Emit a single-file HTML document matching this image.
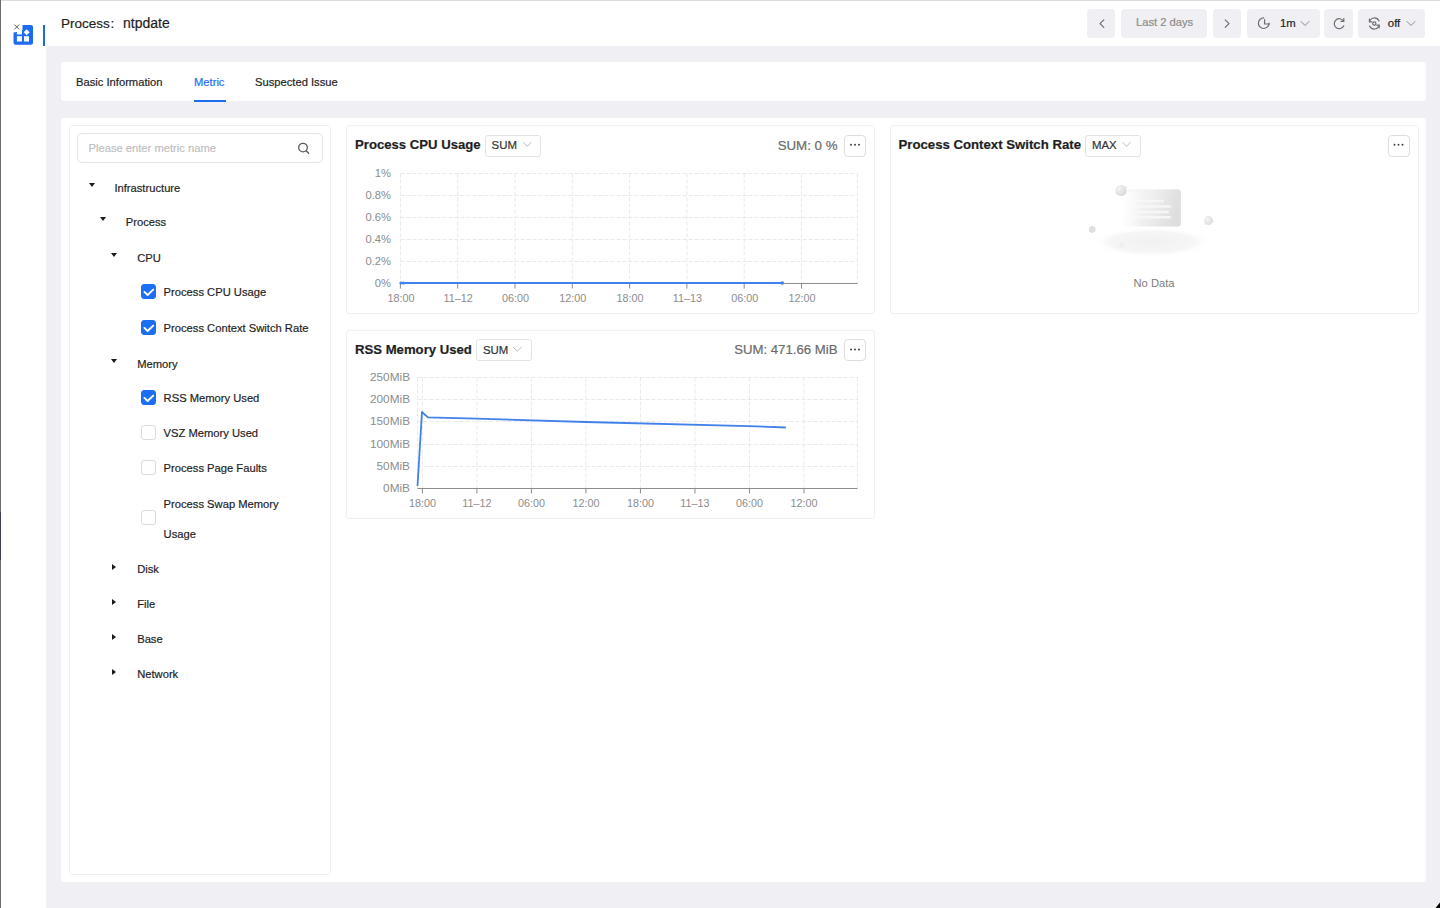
<!DOCTYPE html>
<html><head><meta charset="utf-8">
<style>
*{box-sizing:border-box;margin:0;padding:0}
html,body{width:1440px;height:908px;overflow:hidden;background:#fff;font-family:"Liberation Sans",sans-serif;color:#1f1f1f}
.t,.tree,.tab{-webkit-text-stroke:0.2px currentColor}
.abs{position:absolute}
#lborder{left:0;top:0;width:1px;height:908px;background:#6b6b6b}
#tborder{left:0;top:0;width:1440px;height:1px;background:#dcdcdc}
#main{left:46px;top:46px;width:1394px;height:862px;background:#f0f0f4}
.card{background:#fff;border-radius:3px}
.tab{position:absolute;top:0;height:40px;line-height:40px;font-size:11.2px;color:#1f1f1f;white-space:nowrap}
.btn{position:absolute;top:9px;height:29px;background:#f0f0f4;border-radius:4px}
.t{position:absolute;white-space:nowrap;line-height:1}
.panel{position:absolute;border:1px solid #efefef;border-radius:3px;background:#fff}
.card2{border-color:#f0f0f0;border-radius:3px}
.sel{position:absolute;height:22px;border:1px solid #e3e3e3;border-radius:3px;background:#fff}
.dots{position:absolute;width:22px;height:22px;border:1px solid #dedede;border-radius:4px;background:#fff}
.tree{position:absolute;font-size:11.2px;color:#1f1f1f;white-space:nowrap;line-height:1}
.caret-d{position:absolute;width:0;height:0;border-left:3px solid transparent;border-right:3px solid transparent;border-top:4px solid #1a1a1a}
.caret-r{position:absolute;width:0;height:0;border-top:3px solid transparent;border-bottom:3px solid transparent;border-left:4px solid #1a1a1a}
.cb{position:absolute;width:15px;height:15px;border-radius:3px;border:1px solid #dcdcdc;background:#fff}
.cb.on{background:#1c6ef2;border-color:#1c6ef2}
</style></head><body>
<div class="abs" id="tborder"></div>
<div class="abs" id="lborder"></div><div class="abs" style="left:0;top:512px;width:1px;height:48px;background:#3b3a66"></div>

<!-- sidebar logo -->
<svg class="abs" style="left:10px;top:22px" width="26" height="26" viewBox="10 22 26 26">
  <path d="M22.5 25 H31 Q33 25 33 27 V42.8 Q33 44.8 31 44.8 H15.5 Q13.5 44.8 13.5 42.8 V32.5 Q18 32 22.5 30 Z" fill="#1d6cf0"/>
  <rect x="16.9" y="36.2" width="5" height="5.3" fill="#fff"/>
  <rect x="24" y="36.2" width="5" height="5.3" fill="#fff"/>
  <rect x="16.9" y="30" width="5" height="4.5" fill="#fff"/>
  <path d="M26.7 29.2 L29.7 32.2 L26.7 35.2 L23.7 32.2 Z" fill="#fff"/>
  <path d="M14.4 24.6 L19.1 29.3 M19.1 24.6 L14.4 29.3" stroke="#5a5a5a" stroke-width="1"/>
</svg>
<div class="abs" style="left:43px;top:25px;width:2px;height:21px;background:#1f6ad8"></div>

<!-- header -->
<div class="t" style="left:61px;top:16.6px;font-size:13.5px;color:#1f1f1f">Process</div><div class="t" style="left:110.5px;top:16.6px;font-size:13.5px;color:#1f1f1f">:</div><div class="t" style="left:123px;top:16.2px;font-size:14px;color:#1f1f1f">ntpdate</div>

<div class="btn" style="left:1087px;width:28px"></div>
<div class="btn" style="left:1121px;width:86px"></div>
<div class="btn" style="left:1213px;width:28px"></div>
<div class="btn" style="left:1247px;width:73px"></div>
<div class="btn" style="left:1324px;width:29px"></div>
<div class="btn" style="left:1358px;width:67px"></div>
<svg class="abs" style="left:0;top:0" width="1440" height="46" viewBox="0 0 1440 46">
  <g fill="none" stroke="#6e6e6e" stroke-width="1.2" stroke-linecap="round" stroke-linejoin="round">
    <path d="M1103.8 19.8 L1100 23.6 L1103.8 27.4"/>
    <path d="M1225.2 19.8 L1229 23.6 L1225.2 27.4"/>
    <!-- clock/pie -->
    <path d="M1269 23.2 A5.3 5.3 0 1 1 1263.7 17.9" />
    <path d="M1264.6 19.6 V24 H1269.6" />
    <path d="M1301 21.5 L1305 25.5 L1309 21.5" stroke="#8c8c8c" stroke-width="1"/>
    <!-- refresh -->
    <path d="M1343.6 21.2 A5 5 0 1 0 1343.8 25.8"/>
    <path d="M1343.8 18.6 V21.4 H1341" />
    <!-- auto refresh -->
    <path d="M1369.6 21.6 A5 5 0 0 1 1379 21"/>
    <path d="M1379 25.4 A5 5 0 0 1 1369.6 26"/>
    <path d="M1369.4 19.2 V21.8 H1371.8"/>
    <path d="M1379.2 27.8 V25.2 H1376.8"/>
    <circle cx="1374.3" cy="23.5" r="1.6"/>
    <path d="M1407 21.5 L1411 25.5 L1415 21.5" stroke="#8c8c8c" stroke-width="1"/>
  </g>
</svg>
<div class="t" style="left:1136px;top:17.2px;font-size:11.2px;color:#8c8c8c">Last 2 days</div>
<div class="t" style="left:1280px;top:17.6px;font-size:11.3px;color:#1f1f1f">1m</div>
<div class="t" style="left:1387.8px;top:18.1px;font-size:11.4px;color:#1f1f1f">off</div>

<div class="abs" id="main"></div>
<div class="abs card" style="left:61px;top:62px;width:1365px;height:39px">
  <div class="tab" style="left:15px">Basic Information</div>
  <div class="tab" style="left:133px;color:#1f6ef0">Metric</div>
  <div class="abs" style="left:133px;top:38px;width:32px;height:2px;background:#1f6ef0"></div>
  <div class="tab" style="left:194px">Suspected Issue</div>
</div>
<div class="abs card" style="left:61px;top:118px;width:1365px;height:764px"></div>

<!-- left panel -->
<div class="panel" style="left:69px;top:125px;width:262px;height:750px"></div>
<div class="abs" style="left:77px;top:133px;width:246px;height:30px;border:1px solid #e3e3e3;border-radius:5px"></div>

<!-- tree -->
<div class="t" style="left:88.5px;top:143.02px;font-size:11.2px;color:#bfbfbf">Please enter metric name</div>
<svg class="abs" style="left:295px;top:140px" width="16" height="16" viewBox="295 140 16 16"><circle cx="303" cy="147.6" r="4.3" fill="none" stroke="#5c5c5c" stroke-width="1.3"/><path d="M306.2 150.8 L308.6 153.2" stroke="#5c5c5c" stroke-width="1.4" stroke-linecap="round"/></svg>
<div class="tree" style="left:114.4px;top:182.72px">Infrastructure</div>
<div class="caret-d" style="left:88.7px;top:182.8px"></div>
<div class="tree" style="left:125.8px;top:217.02px">Process</div>
<div class="caret-d" style="left:100.0px;top:217.1px"></div>
<div class="tree" style="left:137.2px;top:252.72px">CPU</div>
<div class="caret-d" style="left:111.4px;top:252.8px"></div>
<div class="tree" style="left:163.6px;top:287.42px">Process CPU Usage</div>
<div class="cb on" style="left:140.7px;top:284.1px"><svg width="15" height="15" viewBox="0 0 15 15" style="position:absolute;left:-1px;top:-1px"><path d="M3.4 7.9 L6.6 11 L12.2 5.6" fill="none" stroke="#fff" stroke-width="1.9" stroke-linecap="round" stroke-linejoin="round"/></svg></div>
<div class="tree" style="left:163.6px;top:323.02px">Process Context Switch Rate</div>
<div class="cb on" style="left:140.7px;top:319.7px"><svg width="15" height="15" viewBox="0 0 15 15" style="position:absolute;left:-1px;top:-1px"><path d="M3.4 7.9 L6.6 11 L12.2 5.6" fill="none" stroke="#fff" stroke-width="1.9" stroke-linecap="round" stroke-linejoin="round"/></svg></div>
<div class="tree" style="left:137.2px;top:358.62px">Memory</div>
<div class="caret-d" style="left:111.4px;top:358.7px"></div>
<div class="tree" style="left:163.6px;top:393.42px">RSS Memory Used</div>
<div class="cb on" style="left:140.7px;top:390.1px"><svg width="15" height="15" viewBox="0 0 15 15" style="position:absolute;left:-1px;top:-1px"><path d="M3.4 7.9 L6.6 11 L12.2 5.6" fill="none" stroke="#fff" stroke-width="1.9" stroke-linecap="round" stroke-linejoin="round"/></svg></div>
<div class="tree" style="left:163.6px;top:428.02px">VSZ Memory Used</div>
<div class="cb" style="left:140.7px;top:424.7px"></div>
<div class="tree" style="left:163.6px;top:463.22px">Process Page Faults</div>
<div class="cb" style="left:140.7px;top:459.9px"></div>
<div class="tree" style="left:163.6px;top:498.52px">Process Swap Memory</div>
<div class="tree" style="left:163.6px;top:528.52px">Usage</div>
<div class="cb" style="left:140.7px;top:510.4px"></div>
<div class="tree" style="left:137.2px;top:564.12px">Disk</div>
<div class="caret-r" style="left:112.3px;top:563.9px"></div>
<div class="tree" style="left:137.2px;top:598.82px">File</div>
<div class="caret-r" style="left:112.3px;top:598.6px"></div>
<div class="tree" style="left:137.2px;top:634.22px">Base</div>
<div class="caret-r" style="left:112.3px;top:634.0px"></div>
<div class="tree" style="left:137.2px;top:668.92px">Network</div>
<div class="caret-r" style="left:112.3px;top:668.7px"></div>

<!-- chart cards -->
<div class="panel card2" style="left:346px;top:125px;width:529px;height:189px"></div>
<div class="panel card2" style="left:346px;top:330px;width:529px;height:189px"></div>
<div class="panel card2" style="left:889.5px;top:125px;width:529px;height:189px"></div>

<svg class="abs" style="left:0;top:0" width="1440" height="908" viewBox="0 0 1440 908" font-family="Liberation Sans, sans-serif">
<g fill="none" stroke="#e9e9e9" stroke-width="1" stroke-dasharray="4 2"><path d="M400.5 173.5H857.5"/><path d="M400.5 195.5H857.5"/><path d="M400.5 217.5H857.5"/><path d="M400.5 239.5H857.5"/><path d="M400.5 261.5H857.5"/><path d="M400.4 173.5V283.5"/><path d="M457.7 173.5V283.5"/><path d="M515.0 173.5V283.5"/><path d="M572.3 173.5V283.5"/><path d="M629.6 173.5V283.5"/><path d="M686.9 173.5V283.5"/><path d="M744.2 173.5V283.5"/><path d="M801.5 173.5V283.5"/><path d="M857.5 173.5V283.5"/></g><path d="M400.5 283.5H857.5" stroke="#8c8c8c" stroke-width="1"/><g stroke="#8c8c8c" stroke-width="1"><path d="M400.4 283.5V288.5"/><path d="M457.7 283.5V288.5"/><path d="M515.0 283.5V288.5"/><path d="M572.3 283.5V288.5"/><path d="M629.6 283.5V288.5"/><path d="M686.9 283.5V288.5"/><path d="M744.2 283.5V288.5"/><path d="M801.5 283.5V288.5"/></g>
<g fill="#8c8c8c" font-size="11.2" text-anchor="end"><text x="391" y="176.5">1%</text><text x="391" y="198.5">0.8%</text><text x="391" y="220.5">0.6%</text><text x="391" y="242.5">0.4%</text><text x="391" y="264.5">0.2%</text><text x="391" y="286.5">0%</text></g>
<g fill="#8c8c8c" font-size="10.8" text-anchor="middle"><text x="400.9" y="302">18:00</text><text x="458.2" y="302">11–12</text><text x="515.5" y="302">06:00</text><text x="572.8" y="302">12:00</text><text x="630.1" y="302">18:00</text><text x="687.4" y="302">11–13</text><text x="744.7" y="302">06:00</text><text x="802.0" y="302">12:00</text></g>
<path d="M400.5 283 H782.3" stroke="#4280ea" stroke-width="1.8" fill="none"/>
<circle cx="401" cy="283" r="1.6" fill="#4280ea"/><circle cx="403.5" cy="283" r="1.6" fill="#4280ea"/><circle cx="782.3" cy="283" r="1.8" fill="#4280ea"/>
<g fill="none" stroke="#e9e9e9" stroke-width="1" stroke-dasharray="4 2"><path d="M417.5 377.5H857.5"/><path d="M417.5 399.5H857.5"/><path d="M417.5 421.5H857.5"/><path d="M417.5 444.5H857.5"/><path d="M417.5 466.5H857.5"/><path d="M417.5 377.5V488.5"/><path d="M422.4 377.5V488.5"/><path d="M476.91 377.5V488.5"/><path d="M531.42 377.5V488.5"/><path d="M585.93 377.5V488.5"/><path d="M640.44 377.5V488.5"/><path d="M694.95 377.5V488.5"/><path d="M749.46 377.5V488.5"/><path d="M803.97 377.5V488.5"/><path d="M857.5 377.5V488.5"/></g><path d="M417.5 488.5H857.5" stroke="#8c8c8c" stroke-width="1"/><g stroke="#8c8c8c" stroke-width="1"><path d="M422.4 488.5V493.5"/><path d="M476.91 488.5V493.5"/><path d="M531.42 488.5V493.5"/><path d="M585.93 488.5V493.5"/><path d="M640.44 488.5V493.5"/><path d="M694.95 488.5V493.5"/><path d="M749.46 488.5V493.5"/><path d="M803.97 488.5V493.5"/></g>
<g fill="#8c8c8c" font-size="11.8" text-anchor="end"><text x="410" y="381.0">250MiB</text><text x="410" y="403.0">200MiB</text><text x="410" y="425.0">150MiB</text><text x="410" y="448.0">100MiB</text><text x="410" y="470.0">50MiB</text><text x="410" y="492.0">0MiB</text></g>
<g fill="#8c8c8c" font-size="10.8" text-anchor="middle"><text x="422.4" y="507">18:00</text><text x="476.91" y="507">11–12</text><text x="531.42" y="507">06:00</text><text x="585.93" y="507">12:00</text><text x="640.44" y="507">18:00</text><text x="694.95" y="507">11–13</text><text x="749.46" y="507">06:00</text><text x="803.97" y="507">12:00</text></g>
<path d="M417.5 486 L422 411.8 L425 414.8 L428 417.4 L476.5 418.6 L585.6 422 L748.7 426.1 L785.8 427.5" stroke="#4280ea" stroke-width="1.8" fill="none" stroke-linejoin="round"/>
<defs>
<linearGradient id="cardg" x1="0" y1="0" x2="1" y2="0.2"><stop offset="0" stop-color="#fbfbfb"/><stop offset="0.55" stop-color="#eeeeee"/><stop offset="1" stop-color="#dedede"/></linearGradient>
<radialGradient id="shad" cx="0.5" cy="0.5" r="0.5"><stop offset="0" stop-color="#f1f1f1"/><stop offset="0.7" stop-color="#f6f6f6"/><stop offset="1" stop-color="#ffffff" stop-opacity="0"/></radialGradient>
<radialGradient id="ball" cx="0.35" cy="0.35" r="0.75"><stop offset="0" stop-color="#f6f6f6"/><stop offset="1" stop-color="#d4d4d4"/></radialGradient>
<linearGradient id="fadeL" x1="0" y1="0" x2="1" y2="0"><stop offset="0" stop-color="#fff" stop-opacity="0.9"/><stop offset="1" stop-color="#fff" stop-opacity="0"/></linearGradient>
</defs>
<ellipse cx="1152" cy="242" rx="60" ry="15" fill="url(#shad)"/>
<rect x="1123.7" y="189.3" width="57.2" height="37.2" rx="3.5" fill="url(#cardg)"/>
<g stroke="#f8f8f8" stroke-width="2.4" stroke-linecap="round" opacity="0.9"><path d="M1132 201H1163"/><path d="M1132 206.5H1170"/><path d="M1132 212H1168"/><path d="M1132 217.2H1170"/></g>
<rect x="1120" y="192" width="22" height="40" fill="url(#fadeL)"/>
<circle cx="1121" cy="190.5" r="5.5" fill="url(#ball)"/>
<path d="M1115.5 194 Q1120 192 1127 186.5" fill="none" stroke="#e6e6e6" stroke-width="1.2"/>
<circle cx="1208.5" cy="220.5" r="4.4" fill="url(#ball)"/>
<path d="M1204 224 Q1209 224.5 1214 221" fill="none" stroke="#e6e6e6" stroke-width="1"/>
<path d="M1092.2 225.6 L1095.4 227.5 L1095.4 231.3 L1092.2 233.2 L1089 231.3 L1089 227.5 Z" fill="#e0e0e0"/>
<circle cx="1121.5" cy="245" r="2.5" fill="#f0f0f0"/>
<text x="1154" y="287" font-size="11.2" fill="#7d7d7d" text-anchor="middle">No Data</text>

</svg>
<!-- chart headers -->
<div class="t" style="left:355px;top:138px;font-size:13.15px;font-weight:700;color:#1f1f1f">Process CPU Usage</div>
<div class="sel" style="left:485.3px;top:134.5px;width:56px"></div>
<div class="t" style="left:491.6px;top:140px;font-size:11.4px;color:#333">SUM</div>
<div class="t" style="right:602.5px;top:139.3px;font-size:13.3px;color:#6b6b6b">SUM: 0 %</div>
<div class="dots" style="left:844px;top:134.5px"></div>

<div class="t" style="left:355px;top:343px;font-size:13.15px;font-weight:700;color:#1f1f1f">RSS Memory Used</div>
<div class="sel" style="left:475.6px;top:339.3px;width:56px"></div>
<div class="t" style="left:483px;top:344.7px;font-size:11.4px;color:#333">SUM</div>
<div class="t" style="right:602.5px;top:343.3px;font-size:13.2px;color:#6b6b6b">SUM: 471.66 MiB</div>
<div class="dots" style="left:844px;top:339.3px"></div>

<div class="t" style="left:898.5px;top:138px;font-size:13.2px;font-weight:700;color:#1f1f1f">Process Context Switch Rate</div>
<div class="sel" style="left:1085px;top:134.5px;width:55.5px"></div>
<div class="t" style="left:1092px;top:140px;font-size:11.4px;color:#333">MAX</div>
<div class="dots" style="left:1387.5px;top:134.5px"></div>

<svg class="abs" style="left:0;top:0" width="1440" height="400" viewBox="0 0 1440 400">
 <g fill="none" stroke="#bdbdbd" stroke-width="1" stroke-linecap="round" stroke-linejoin="round">
  <path d="M523.6 142.5 L527.3 146.3 L531 142.5"/>
  <path d="M513.3 347.2 L517.3 351.2 L521.3 347.2"/>
  <path d="M1122.8 142.5 L1126.5 146.3 L1130.2 142.5"/>
 </g>
 <g fill="#3a3a3a">
  <circle cx="851" cy="144.7" r="0.95"/><circle cx="855" cy="144.7" r="0.95"/><circle cx="859" cy="144.7" r="0.95"/>
  <circle cx="851" cy="349.5" r="0.95"/><circle cx="855" cy="349.5" r="0.95"/><circle cx="859" cy="349.5" r="0.95"/>
  <circle cx="1394.5" cy="144.7" r="0.95"/><circle cx="1398.5" cy="144.7" r="0.95"/><circle cx="1402.5" cy="144.7" r="0.95"/>
 </g>
</svg>
<svg class="abs" style="left:1430px;top:898px" width="10" height="10" viewBox="1430 898 10 10"><path d="M1440 902.5 L1440 908 L1435.5 908 Z" fill="#000"/></svg>
</body></html>
